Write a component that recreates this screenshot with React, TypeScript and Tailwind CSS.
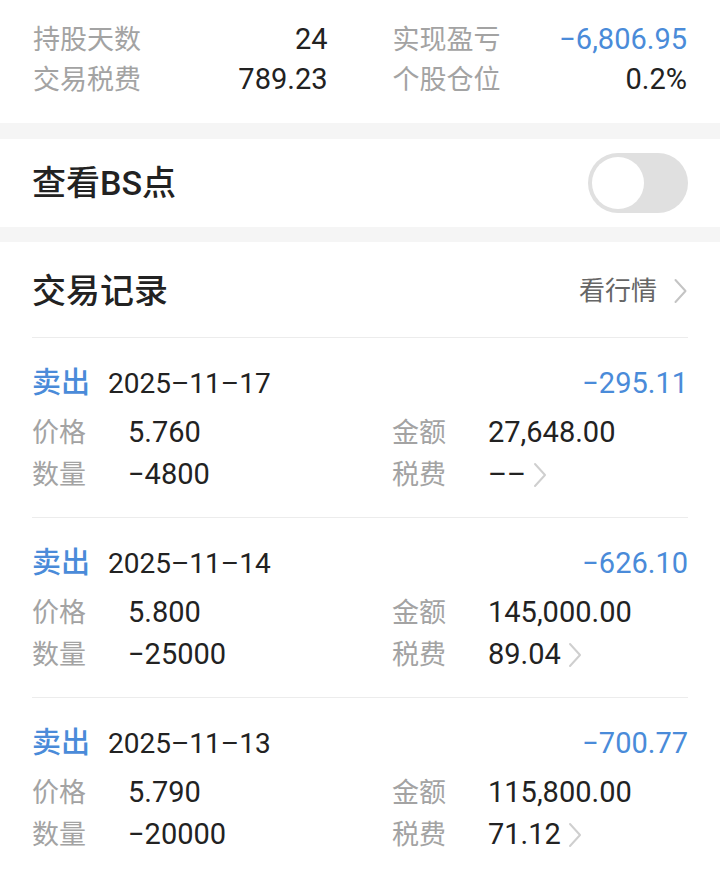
import React from "react";

const FONT = { fontFamily: '"Roboto", "Noto Sans CJK SC", sans-serif' };

function Chevron({ className }: { className?: string }) {
  return (
    <svg viewBox="0 0 14 26" className={className} fill="none">
      <path d="M2 2 L12 13 L2 24" stroke="currentColor" strokeWidth="2" strokeLinecap="round" strokeLinejoin="round" />
    </svg>
  );
}

type Rec = { date: string; pnl: string; price: string; amount: string; qty: string; fee: string };

const records: Rec[] = [
  { date: "2025–11–17", pnl: "−295.11", price: "5.760", amount: "27,648.00", qty: "−4800", fee: "––" },
  { date: "2025–11–14", pnl: "−626.10", price: "5.800", amount: "145,000.00", qty: "−25000", fee: "89.04" },
  { date: "2025–11–13", pnl: "−700.77", price: "5.790", amount: "115,800.00", qty: "−20000", fee: "71.12" },
];

function Record({ r }: { r: Rec }) {
  return (
    <div className="border-t border-[#ececec] pt-[26px] pb-[22px]">
      <div className="flex h-[40px] items-center justify-between">
        <div className="flex items-center">
          <span className="text-[29px] font-medium text-[#4a8bd9]">卖出</span>
          <span className="ml-[18px] text-[28px] text-[#222]">{r.date}</span>
        </div>
        <span className="text-[29px] text-[#4a8bd9]">{r.pnl}</span>
      </div>
      <div className="mt-[9px] grid grid-cols-[360px_1fr]">
        <div className="flex h-[40px] items-center">
          <span className="w-[96px] text-[27px] text-[#a3a3a3]">价格</span>
          <span className="text-[29px] text-[#222]">{r.price}</span>
        </div>
        <div className="flex h-[40px] items-center">
          <span className="w-[96px] text-[27px] text-[#a3a3a3]">金额</span>
          <span className="text-[29px] text-[#222]">{r.amount}</span>
        </div>
      </div>
      <div className="mt-[2px] grid grid-cols-[360px_1fr]">
        <div className="flex h-[40px] items-center">
          <span className="w-[96px] text-[27px] text-[#a3a3a3]">数量</span>
          <span className="text-[29px] text-[#222]">{r.qty}</span>
        </div>
        <div className="flex h-[40px] items-center">
          <span className="w-[96px] text-[27px] text-[#a3a3a3]">税费</span>
          <span className="text-[29px] text-[#222]">{r.fee}</span>
          <Chevron className="ml-[7px] h-[26px] w-[14px] text-[#cfcfcf]" />
        </div>
      </div>
    </div>
  );
}

export default function App() {
  return (
    <div className="w-[720px] h-[875px] overflow-hidden bg-white" style={FONT}>
      <div className="px-[33px] pt-[20px] pb-[23px]">
        <div className="grid grid-cols-2 gap-x-[65px]">
          <div className="flex h-[40px] items-center justify-between">
            <span className="text-[27px] text-[#a3a3a3]">持股天数</span>
            <span className="text-[29px] text-[#222]">24</span>
          </div>
          <div className="flex h-[40px] items-center justify-between">
            <span className="text-[27px] text-[#a3a3a3]">实现盈亏</span>
            <span className="text-[29px] text-[#4a8bd9]">−6,806.95</span>
          </div>
          <div className="flex h-[40px] items-center justify-between">
            <span className="text-[27px] text-[#a3a3a3]">交易税费</span>
            <span className="text-[29px] text-[#222]">789.23</span>
          </div>
          <div className="flex h-[40px] items-center justify-between">
            <span className="text-[27px] text-[#a3a3a3]">个股仓位</span>
            <span className="text-[29px] text-[#222]">0.2%</span>
          </div>
        </div>
      </div>
      <div className="h-[16px] bg-[#f5f5f5]" />
      <div className="flex h-[88px] items-center justify-between px-[32px]">
        <span className="text-[34px] font-medium text-[#222]">查看BS点</span>
        <div className="flex h-[60px] w-[100px] items-center rounded-full bg-[#e0e0e0] p-[4px]">
          <div className="h-[52px] w-[52px] rounded-full bg-white" />
        </div>
      </div>
      <div className="h-[15px] bg-[#f5f5f5]" />
      <div className="px-[32px]">
        <div className="flex h-[95px] items-center justify-between pt-[3px]">
          <span className="text-[34px] font-medium text-[#222]">交易记录</span>
          <div className="flex items-center">
            <span className="text-[26px] text-[#666]">看行情</span>
            <Chevron className="ml-[16px] h-[26px] w-[15px] text-[#c4c4c4]" />
          </div>
        </div>
        {records.map((r) => (
          <Record key={r.date} r={r} />
        ))}
      </div>
    </div>
  );
}
